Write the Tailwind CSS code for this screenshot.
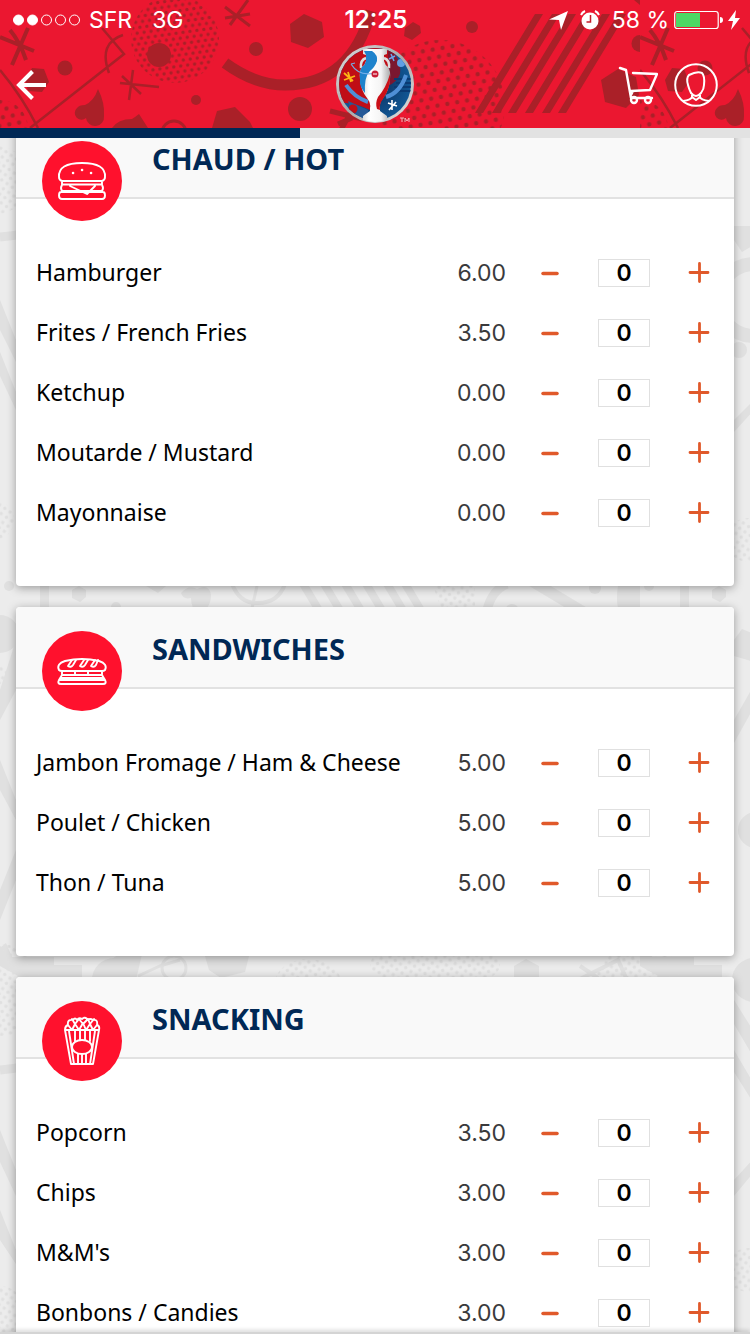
<!DOCTYPE html>
<html lang="fr">
<head>
    <meta charset="UTF-8">
    <meta name="viewport" content="width=device-width, initial-scale=1.0">
    <title>Menu</title>
    <script src="https://cdn.jsdelivr.net/npm/@tailwindcss/browser@4"></script>
</head>
<body class="bg-[#ececec] font-['Noto_Sans',sans-serif] text-black">

<div class="relative flex flex-col h-screen overflow-hidden">

    <!-- Page background -->
    <svg class="absolute inset-0 w-full h-full" viewBox="0 0 750 1334" preserveAspectRatio="xMidYMin slice" aria-hidden="true">
        <defs>
            <pattern id="dots" width="9" height="9" patternUnits="userSpaceOnUse" patternTransform="rotate(-10)">
                <circle cx="2" cy="2" r="1.700" fill="#e0e0e0"/>
                <circle cx="6.500" cy="6.500" r="1.700" fill="#e0e0e0"/>
            </pattern>
            <g id="page-shapes" fill="#e0e0e0">
                <circle cx="-4" cy="180" r="34" fill="url(#dots)"/>
                <path d="M0 237Q60 232 90 200" fill="none" stroke="#e0e0e0" stroke-width="9"/>
                <path d="M0 300L16 340V362L0 330zM0 352L16 392V410L0 376z"/>
                <circle cx="9" cy="586" r="5"/>
                <circle cx="0" cy="634" r="19"/>
                <circle cx="-6" cy="520" r="20" fill="url(#dots)"/>
                <circle cx="0" cy="675" r="9" fill="url(#dots)"/>
                <path d="M16 640V690L0 720V690z"/>
                <path d="M0 760L16 800V820L0 790zM0 890L16 850V880L0 920z"/>
                <path d="M40 586h9v22h-9zM72 590l7-4 7 4v7l-6 5-8-4z"/>
                <circle cx="116" cy="607" r="5"/>
                <path d="M146 586h20l-8 7z"/>
                <path d="M181 593q8-9 16-4 12-6 14 6 0 8-4 13h-14q-2-5-2-10-8 2-10-5z"/>
                <g fill="none" stroke="#e0e0e0">
                    <path d="M232 584q8 20 26 19 20 0 27-19" stroke-width="4"/>
                    <path d="M257 586l-5 22" stroke-width="3"/>
                    <path d="M302 582l18 30M323 582l18 30M344 582l18 30M365 582l18 30M386 582l18 30M404 582l18 30" stroke-width="8"/>
                    <path d="M487 610q5-20 20-26" stroke-width="9"/>
                    <path d="M530 580l60 36" stroke-width="11"/>
                </g>
                <path d="M433 586h42v22h-34z" fill="url(#dots)"/>
                <circle cx="512" cy="611" r="7"/>
                <circle cx="595" cy="588" r="6"/>
                <path d="M618 586h22v22h-22q-2-10 0-22z"/>

                <path d="M0 948l6-5 6 14h42v8h28v12H20L0 966z"/>
                <circle cx="0" cy="990" r="46" fill="url(#dots)"/>
                <path d="M0 1070Q60 1064 90 1040" fill="none" stroke="#e0e0e0" stroke-width="9"/>
                <path d="M100 980q6-20 20-26h22l-6 26z"/>
                <circle cx="174" cy="968" r="12" fill="none" stroke="#e0e0e0" stroke-width="3"/>
                <path d="M138 976l22-10 20-6" fill="none" stroke="#e0e0e0" stroke-width="3"/>
                <path d="M205 956h44l-4 16-24 6-12-8z"/>
                <ellipse cx="308" cy="985" rx="34" ry="26" fill="url(#dots)"/>
                <ellipse cx="435" cy="965" rx="65" ry="24" fill="url(#dots)"/>
                <path d="M514 966l12-7 13 7v12h-25z"/>
                <path d="M578 980l40-20 10 22M580 966l18 12" fill="none" stroke="#e0e0e0" stroke-width="4"/>
                <path d="M0 1130L16 1170V1196L0 1162zM0 1210L16 1250V1264L0 1240z"/>
                <circle cx="0" cy="1310" r="24" fill="url(#dots)"/>

                <path d="M94 640l8-11 12 5v28l-20-6z"/>
                <circle cx="114" cy="300" r="36" fill="none" stroke="#e0e0e0" stroke-width="14"/>
                <circle cx="99" cy="350" r="8"/>
                <path d="M94 240l8 12 10-6v-20H94z"/>
                <path d="M94 420l20-20v10l-20 22zM94 720l20-35v22l-20 36z"/>
                <circle cx="108" cy="540" r="22" fill="url(#dots)"/>
                <circle cx="116" cy="830" r="18"/>
                <circle cx="114" cy="980" r="22"/>
                <path d="M94 1000l20 32v26l-20-34zM94 1050l20 34v20l-20-32z"/>
                <path d="M94 1180l20-22v14l-20 24z"/>
                <circle cx="108" cy="1270" r="22" fill="url(#dots)"/>
            </g>
        </defs>
        <use href="#page-shapes"/>
        <use href="#page-shapes" x="640"/>
    </svg>

    <header class="relative z-10 h-32 shrink-0 overflow-hidden bg-[#eb1730] text-white">
        <svg class="absolute inset-0 w-full h-full" viewBox="0 0 750 128" preserveAspectRatio="xMidYMin slice" aria-hidden="true">
            <defs>
                <pattern id="reddots" width="7" height="11" patternUnits="userSpaceOnUse" patternTransform="rotate(-8)">
                    <circle cx="1.800" cy="2.500" r="1.700" fill="#aa2028"/>
                    <circle cx="5.200" cy="8" r="1.700" fill="#aa2028"/>
                </pattern>
                <pattern id="bigdots" width="10" height="16" patternUnits="userSpaceOnUse" patternTransform="rotate(-10)">
                    <circle cx="2.500" cy="4" r="2.200" fill="#aa2028"/>
                    <circle cx="7.500" cy="12" r="2.200" fill="#aa2028"/>
                </pattern>
                <g id="tile" fill="#aa2028">
                    <circle cx="65" cy="68" r="7.500"/>
                    <path d="M32 68l12 1 5 13-7 10-14-1-3-11z"/>
                    <path d="M98 89q7 14 6 27a9 9 0 0 1-18 2 6.500 6.500 0 0 1-9-10q2-3 8-3 9-4 13-16z"/>
                    <circle cx="0" cy="128" r="28" fill="url(#bigdots)"/>
                    <g fill="none" stroke="#aa2028">
                        <path d="M0 37l34 14M12 65l16-37M10 30q10 12 16 30" stroke-width="4"/>
                        <path d="M0 70q22 26 38 58M30 128l94-74-22-26M123 35Q98 43 109 73" stroke-width="2.500"/>
                    </g>
                </g>
            </defs>
            <use href="#tile"/>
            <svg x="640" width="110" height="128"><use href="#tile"/></svg>
            <circle cx="175" cy="39" r="44" fill="url(#reddots)"/>
            <circle cx="440" cy="105" r="65" fill="url(#bigdots)"/>
            <g fill="#aa2028">
                <circle cx="159" cy="55" r="12"/>
                <circle cx="196" cy="100" r="5"/>
                <path d="M212 128l5-17 18-4 15 15 3 6z"/>
                <path d="M304 14l18 8 2 15-16 11-17-6-1-18z"/>
                <circle cx="256" cy="49" r="7"/>
                <circle cx="300" cy="109" r="12"/>
                <path d="M405 28l8-6 7 4 1 7-9 7-8-4z"/>
                <circle cx="472" cy="27" r="6"/>
                <path d="M112 128q6-9 20-9l3-2 4-3 9 14z"/>
                <path d="M535 14h8l-60 99h-8zM552 14h8l-60 99h-8zM568 14h8l-60 99h-8zM585 14h8l-60 99h-8zM602 14h8l-60 99h-8zM618 14h8l-60 99h-8z"/>
                <path d="M601 80l17-11 18 8 3 18-13 13-21-6z"/>
                <path d="M640 35a8 8 0 0 0 0 17z"/>
                <path d="M634 0h6v5z"/>
            </g>
            <g fill="none" stroke="#aa2028">
                <path d="M120 83l39 4M133 70l-4 30M122 76l19 18" stroke-width="2.500"/>
                <path d="M225 7l25 19M225 18l25-4M248 0l-18 25" stroke-width="3"/>
                <path d="M225 63q30 22 60 22 66 0 86-74" stroke-width="11"/>
                <circle cx="174" cy="133" r="12" stroke-width="3"/>
                <path d="M330 111l32 8M351 112l-10 18M338 124l14-6" stroke-width="5"/>
            </g>
        </svg>

        <!-- Status bar -->
        <div class="relative grid grid-cols-[1fr_auto_1fr] items-center h-10 pl-3 pr-[10px] font-['Inter',sans-serif] text-[23px] leading-10">
            <div class="flex items-center">
                <svg class="w-[70px] h-4 mr-[7px]" viewBox="0 0 70 16" fill="#fff" stroke="#fff" aria-label="Signal">
                    <circle cx="6.500" cy="8" r="5"/><circle cx="20.500" cy="8" r="5"/>
                    <g fill="none"><circle cx="34.500" cy="8" r="5"/><circle cx="48.500" cy="8" r="5"/><circle cx="62.500" cy="8" r="5"/></g>
                </svg>
                <span>SFR</span>
                <span class="ml-5">3G</span>
            </div>
            <div class="text-[24px] leading-10 font-semibold">12:25</div>
            <div class="flex items-center justify-end">
                <svg class="w-[19px] h-[19px] mr-3" viewBox="0 0 19 19" fill="#fff" aria-hidden="true"><path d="M0 8.500L19 0 12 19 10 9z"/></svg>
                <svg class="w-5 h-5 mr-3" viewBox="0 0 20 20" aria-hidden="true">
                    <circle cx="10" cy="11" r="8.500" fill="#fff"/>
                    <path d="M1 5a8 8 0 0 1 4-4M15 1a8 8 0 0 1 4 4" fill="none" stroke="#fff" stroke-width="2"/>
                    <path d="M10.500 5v7H6.500" fill="none" stroke="#c41d2b" stroke-width="1.500"/>
                </svg>
                <span>58 %</span>
                <svg class="w-[49px] h-5 mx-[5px]" viewBox="0 0 49 20" aria-label="Battery">
                    <rect x=".7" y="1.500" width="43.500" height="17" rx="2.500" fill="none" stroke="#fff" stroke-width="1.200"/>
                    <rect x="2" y="3" width="24" height="14" fill="#4cd964"/>
                    <path d="M46 7q3 0 3 3t-3 3z" fill="#fff"/>
                </svg>
                <svg class="w-3 h-5" viewBox="0 0 12 20" fill="#fff" aria-hidden="true"><path d="M8 0L0 11h5L3 20l9-12H7z"/></svg>
            </div>
        </div>

        <!-- Navigation -->
        <div class="relative grid grid-cols-[1fr_auto_1fr] items-center h-[88px] pt-[2px] pl-4 pr-4">
            <a href="#" aria-label="Retour" class="justify-self-start">
                <svg class="w-[30px] h-[30px]" viewBox="0 0 30 30" fill="none" stroke="#fff" stroke-width="4"><path d="M30 15H3M16.500 1.500L3 15l13.500 13.500"/></svg>
            </a>
            <svg class="w-[78px] h-[82px]" viewBox="0 0 78 82" role="img" aria-label="Euro 2016">
                <defs>
                    <clipPath id="disc"><circle cx="39" cy="40" r="36"/></clipPath>
                    <linearGradient id="rim" x1="0" y1="0" x2="1" y2="1"><stop offset="0" stop-color="#ddd"/><stop offset=".5" stop-color="#aaa"/><stop offset="1" stop-color="#e4e4e4"/></linearGradient>
                    <radialGradient id="blue"><stop offset="0" stop-color="#0c2f5c"/><stop offset="1" stop-color="#115c9c"/></radialGradient>
                    <linearGradient id="cup"><stop offset="0" stop-color="#ccc"/><stop offset=".3" stop-color="#fff"/><stop offset=".7" stop-color="#f4f4f4"/><stop offset="1" stop-color="#aaa"/></linearGradient>
                </defs>
                <circle cx="39" cy="40" r="39" fill="url(#rim)"/>
                <g clip-path="url(#disc)">
                    <path d="M0 0h80v82H0z" fill="url(#blue)"/>
                    <path d="M0 0h48q18 12 15 30-4 10-15 12L34 66Q22 60 10 59H0z" fill="#c00d16"/>
                    <path d="M52 6q14 7 12 24-3 8-12 12z" fill="#7b1730"/>
                    <path d="M58 35h20M60 39h18M58 43h20M58 47h20" stroke="#0a3a73" stroke-width="2"/>
                    <path d="M10 41q8 12 22 17M50 53q14-4 20-22" fill="none" stroke="#4f8fd6" stroke-width="4"/>
                    <circle cx="65" cy="19" r="4" fill="#609fe4"/>
                    <path d="M12 57l20 9v12H18z" fill="#255997"/>
                    <circle cx="17" cy="65" r="4.500" fill="#c00d16"/>
                </g>
                <path d="M12 28l3 10M8 36l11-4M8 29l9 8" stroke="#fbb615" stroke-width="1.800"/>
                <path d="M56 56v10M52 59l9 3M53 66l7-8" stroke="#fff" stroke-width="1.600"/>
                <path d="M55 10l3 7M53 15l6-3" stroke="#6ba7ee" stroke-width="1.500"/>
                <path d="M30 14q-6 2-5 10M48 14q6 2 5 10" fill="none" stroke="#ddd" stroke-width="2.500"/>
                <path d="M27 5h24v5l-3 1v6q1 4 4 6 3 4 2 12-1 12-7 19-4 5-3 10v3l7 5v4q-12 4-24 0v-4l7-5v-3q1-5-3-10-6-7-7-19-1-8 2-12 3-2 4-6v-6l-3-1z" fill="url(#cup)"/>
                <path d="M28 7h8q6 4 5 10-2 6-7 10-6 6-5 22-6-7-5-14-1-8 2-12 3-2 4-6v-6z" fill="#1e83cc"/>
                <path d="M54 30q1 14-7 25-4 5-3 11l-3-1q-2-6 1-12 8-9 12-23z" fill="#cb0f18"/>
                <path d="M15 20q8 13 24 9M15 20l4-1" fill="none" stroke="#74aee8" stroke-width="1.200"/>
                <circle cx="39" cy="30" r="3.500" fill="#c91c35"/>
                <path d="M37 30h4" stroke="#fff" stroke-width="1"/>
                <path d="M64 74h4M66 74v4M69 78v-4l2 3 2-3v4" fill="none" stroke="#f5b5bc" stroke-width="1"/>
            </svg>
            <div class="justify-self-end flex items-center gap-4 pr-4">
                <a href="#" aria-label="Panier">
                    <svg class="w-10 h-10" viewBox="0 0 40 40" fill="none" stroke="#fff" stroke-width="2.400" stroke-linecap="round" stroke-linejoin="round">
                        <path d="M2 3l6 2 5 28h21M15 8l24 1-7 16-19 1M13 30l2-4"/>
                        <circle cx="16" cy="35" r="3"/><circle cx="30" cy="35" r="3"/>
                    </svg>
                </a>
                <a href="#" aria-label="Profil">
                    <svg class="w-11 h-11" viewBox="0 0 44 44" fill="none" stroke="#fff" stroke-width="2">
                        <circle cx="22" cy="22" r="20.800"/>
                        <path d="M14 22q-2-7 1-10 8-4 13-2 3 3 2 12 0 4-3 8-5 6-10 0-2-4-3-8zM18 32v2q-1 3-9 4M26 32v2q1 3 9 4M18 34l4 3 4-3" stroke-linejoin="round"/>
                    </svg>
                </a>
            </div>
        </div>
    </header>

    <div class="relative z-10 h-[10px] shrink-0 bg-[#e2e2e2]">
        <div class="h-full w-2/5 bg-[#002855]"></div>
    </div>

    <main class="relative flex-1 min-h-0 overflow-hidden px-4">
        <div id="menu" class="-mt-[21px] flex flex-col gap-[21px]"></div>
    </main>

    <div class="relative z-10 h-[2px] shrink-0 bg-[#d4d4d4] shadow-[0_-1px_4px_rgba(0,0,0,0.3)]"></div>
</div>

<script>
    const icons = {
        burger: `<path d="M17 36q-1-14 23-14t23 14q0 3-3 4H20q-3-1-3-4zM20 43.500h40M20 40v4M60 40v4M20 44q-2 3 0 6h40q2-3 0-6M28 45l17 8 8-8M19 51h42q2 0 2 3.500t-3 3.500H20q-3 0-3-3.500t2-3.500z"/><path d="M31 32h0.100M40 29h0.100M49 32h0.100" stroke-width="2.500"/>`,
        sandwich: `<path d="M17 39q-3-6 6-9 17-4 34 0 9 3 6 9-1 1-3 1H20q-2 0-3-1zM20 40v4h40v-4M33 40v4M46 40v4M20 44l-3 5h46l-3-5M19 47h42M17 49q-2 4 2 4h42q4 0 2-4"/><path d="M30 29l-4 6q3 2 5-1l3-5M42 29l-4 6q3 2 5-1l3-5M53 29l-4 6q3 2 5-1l2-5"/>`,
        popcorn: `<path d="M23 29h34l-6 34H29zM23 29q0-4 3-5-1-6 5-5 2-3 4 0 2-3 5-1 3-3 6 1 2-2 5 0 5-1 4 5 3 1 2 5M26 24l4 5 3-6 4 6 4-7 3 7 4-6 3 6 4-5M30 18l3 5 4-5 4 5 5-5 2 5 4-5M27 30l5 33M53 30l-5 33M33 30v10M38 30v9M43 30v9M48 30v10M36 53v10M40 54v9M44 53v10"/><ellipse cx="40" cy="46" rx="10" ry="7" fill="#ff112d"/>`
    };

    const sections = [
        { title: 'CHAUD / HOT', icon: 'burger', items: [['Hamburger', '6.00'], ['Frites / French Fries', '3.50'], ['Ketchup', '0.00'], ['Moutarde / Mustard', '0.00'], ['Mayonnaise', '0.00']] },
        { title: 'SANDWICHES', icon: 'sandwich', items: [['Jambon Fromage / Ham &amp; Cheese', '5.00'], ['Poulet / Chicken', '5.00'], ['Thon / Tuna', '5.00']] },
        { title: 'SNACKING', icon: 'popcorn', items: [['Popcorn', '3.50'], ['Chips', '3.00'], ["M&amp;M's", '3.00'], ['Bonbons / Candies', '3.00']] }
    ];

    const row = ([name, price], id) => `
        <li class="flex items-center h-15">
            <label for="${id}" class="flex-1 pb-[2px] text-[23px] leading-8">${name}</label>
            <span class="font-['Inter',sans-serif] text-[23px] leading-8 text-[#3a3a3c]">${price}</span>
            <button type="button" data-step="-1" aria-label="Retirer ${name}" class="ml-[30px] w-7 h-7 flex items-center justify-center cursor-pointer">
                <svg class="w-5 h-5" viewBox="0 0 20 20" stroke="#e0592a" stroke-width="3.500" stroke-linecap="round"><path d="M3 10.500h14"/></svg>
            </button>
            <input id="${id}" type="text" inputmode="numeric" value="0" class="ml-[34px] w-13 h-7 border border-[#e0e0e0] bg-white text-center font-['Inter',sans-serif] text-[23px] font-semibold">
            <button type="button" data-step="1" aria-label="Ajouter ${name}" class="ml-[35px] w-7 h-7 flex items-center justify-center cursor-pointer">
                <svg class="w-[22px] h-[22px]" viewBox="0 0 22 22" stroke="#e0592a" stroke-width="2.800" stroke-linecap="round"><path d="M2 10.500h18M11.500 1.500v18"/></svg>
            </button>
        </li>`;

    const menu = document.getElementById('menu');
    menu.innerHTML = sections.map((s, i) => `
        <section class="bg-white rounded-[4px] shadow-[0_2px_10px_rgba(0,0,0,0.35)]">
            <div class="flex items-start h-[82px] pl-[26px] pt-6 bg-[#f9f9f9] border-b-2 border-[#e2e2e2] rounded-t-[4px]">
                <svg class="w-20 h-20 shrink-0" viewBox="0 0 80 80" fill="none" stroke="#fff" stroke-width="1.900" stroke-linejoin="round" stroke-linecap="round" aria-hidden="true">
                    <circle cx="40" cy="40" r="40" fill="#ff112d" stroke="none"/>${icons[s.icon]}
                </svg>
                <h2 class="ml-[30px] text-[29px] leading-9 font-bold text-[#002855]">${s.title}</h2>
            </div>
            <ul class="pt-11 pb-[43px] pl-5 pr-[21px]">${s.items.map((it, j) => row(it, `qty-${i}-${j}`)).join('')}</ul>
        </section>`).join('');

    menu.addEventListener('click', e => {
        const btn = e.target.closest('button[data-step]');
        if (!btn) return;
        const input = btn.parentElement.querySelector('input');
        input.value = Math.max(0, (parseInt(input.value) || 0) + Number(btn.dataset.step));
    });
</script>
</body>
</html>
